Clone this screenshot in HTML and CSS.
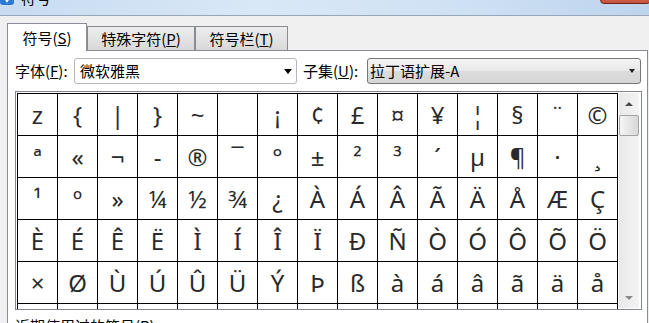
FILE: index.html
```html
<!DOCTYPE html>
<html lang="zh-CN">
<head>
<meta charset="utf-8">
<title>符号</title>
<link rel="stylesheet" href="styles.css">
</head>
<body>
<div class="titlebar">
  <div class="title">
    <svg class="app-icon" viewBox="0 0 14 14" width="14" height="14"><rect x="0" y="0" width="14" height="14" rx="3" fill="#2d7ad6"/><path d="M3 4 L7 10 L11 4" stroke="#fff" stroke-width="2" fill="none"/></svg>
    <span class="title-text">符号</span>
  </div>
  <div class="close-btn"></div>
</div>
<div class="tabs">
  <div class="tab tab-active">符号(<u>S</u>)</div>
  <div class="tab tab-special">特殊字符(<u>P</u>)</div>
  <div class="tab tab-bar">符号栏(<u>T</u>)</div>
</div>
<div class="panel">
  <div class="font-row">
    <span class="lbl lbl-font">字体(<u>F</u>):</span>
    <div class="combo combo-font"><span>微软雅黑</span><i class="arrow"></i></div>
    <span class="lbl lbl-subset">子集(<u>U</u>):</span>
    <div class="combo combo-subset"><span>拉丁语扩展-A</span><i class="arrow arrow-small"></i></div>
  </div>
  <div class="charbox">
    <div class="chargrid">
      <div class="cell">z</div><div class="cell">{</div><div class="cell">|</div><div class="cell">}</div><div class="cell">~</div><div class="cell">&nbsp;</div><div class="cell">¡</div><div class="cell">¢</div><div class="cell">£</div><div class="cell">¤</div><div class="cell">¥</div><div class="cell">¦</div><div class="cell">§</div><div class="cell">¨</div><div class="cell">©</div>
      <div class="cell">ª</div><div class="cell">«</div><div class="cell">¬</div><div class="cell">-</div><div class="cell">®</div><div class="cell">¯</div><div class="cell">°</div><div class="cell">±</div><div class="cell">²</div><div class="cell">³</div><div class="cell">´</div><div class="cell">µ</div><div class="cell">¶</div><div class="cell">·</div><div class="cell">¸</div>
      <div class="cell">¹</div><div class="cell">º</div><div class="cell">»</div><div class="cell">¼</div><div class="cell">½</div><div class="cell">¾</div><div class="cell">¿</div><div class="cell">À</div><div class="cell">Á</div><div class="cell">Â</div><div class="cell">Ã</div><div class="cell">Ä</div><div class="cell">Å</div><div class="cell">Æ</div><div class="cell">Ç</div>
      <div class="cell">È</div><div class="cell">É</div><div class="cell">Ê</div><div class="cell">Ë</div><div class="cell">Ì</div><div class="cell">Í</div><div class="cell">Î</div><div class="cell">Ï</div><div class="cell">Ð</div><div class="cell">Ñ</div><div class="cell">Ò</div><div class="cell">Ó</div><div class="cell">Ô</div><div class="cell">Õ</div><div class="cell">Ö</div>
      <div class="cell">×</div><div class="cell">Ø</div><div class="cell">Ù</div><div class="cell">Ú</div><div class="cell">Û</div><div class="cell">Ü</div><div class="cell">Ý</div><div class="cell">Þ</div><div class="cell">ß</div><div class="cell">à</div><div class="cell">á</div><div class="cell">â</div><div class="cell">ã</div><div class="cell">ä</div><div class="cell">å</div>
      <div class="cell"></div><div class="cell"></div><div class="cell"></div><div class="cell"></div><div class="cell"></div><div class="cell"></div><div class="cell"></div><div class="cell"></div><div class="cell"></div><div class="cell"></div><div class="cell"></div><div class="cell"></div><div class="cell"></div><div class="cell"></div><div class="cell"></div>
    </div>
    <div class="vscroll">
      <div class="sb-btn"><i class="tri-up"></i></div>
      <div class="sb-thumb"></div>
      <div class="sb-track"></div>
      <div class="sb-btn"><i class="tri-down"></i></div>
    </div>
  </div>
  <div class="recent">近期使用过的符号(<u>R</u>):</div>
</div>
</body>
</html>
```
FILE: styles.css
```css
html, body {
  margin: 0;
  padding: 0;
}
body {
  width: 649px;
  height: 323px;
  overflow: hidden;
  background: #f0f0f0;
  font-family: "Noto Sans CJK SC", "Noto Sans", sans-serif;
  font-size: 15px;
  color: #000;
}

.titlebar {
  height: 15px;
  border-bottom: 1px solid #97a7b9;
  background: linear-gradient(90deg, #c7dbf1 0%, #d9e8f7 40%, #cfe1f4 70%, #bdd4ed 100%);
  display: flex;
  justify-content: space-between;
  align-items: flex-start;
}
.title {
  display: flex;
  align-items: center;
  gap: 7px;
  margin-top: -11px;
  line-height: 18px;
}
.app-icon {
  display: block;
}
.close-btn {
  width: 51px;
  height: 20px;
  margin-top: -16px;
  margin-right: -2px;
  box-sizing: border-box;
  border: 1px solid #6e2418;
  border-radius: 0 0 4px 4px;
  background: linear-gradient(#e49a88, #c7503a);
}

.tabs {
  display: flex;
  align-items: flex-end;
  padding-left: 7px;
  margin-top: 7px;
  margin-bottom: -1px;
  position: relative;
}
.tab {
  box-sizing: border-box;
  height: 24px;
  margin-bottom: 1px;
  border: 1px solid #898c95;
  border-bottom: none;
  background: linear-gradient(#ededed, #d9d9d9);
  display: flex;
  align-items: center;
  justify-content: center;
  line-height: 18px;
  white-space: nowrap;
}
.tab-active {
  width: 80px;
  height: 28px;
  margin-bottom: 0;
  background: #fff;
}
.tab-special { width: 108px; }
.tab-bar { width: 93px; }

.panel {
  box-sizing: border-box;
  margin-left: 7px;
  width: 641px;
  height: 290px;
  border: 1px solid #898c95;
  background: #fff;
  padding: 7px 5px 0 7px;
}

.font-row {
  display: flex;
  align-items: center;
  height: 26px;
}
.lbl {
  line-height: 18px;
  white-space: nowrap;
}
.lbl-font { width: 59px; }
.lbl-subset { width: 64px; margin-left: 6px; }
.combo {
  box-sizing: border-box;
  height: 26px;
  display: flex;
  align-items: center;
  justify-content: space-between;
  border-radius: 3px;
  line-height: 18px;
  white-space: nowrap;
}
.combo-font {
  width: 223px;
  border: 1px solid #b5b7bd;
  background: #fff;
  padding: 0 4px 0 5px;
}
.combo-subset {
  width: 274px;
  border: 1px solid #777;
  background: linear-gradient(#f4f4f4, #e8e8e8 50%, #dcdcdc 51%, #d6d6d6);
  padding: 0 5px 0 2px;
}
.arrow {
  width: 0;
  height: 0;
  border-left: 4px solid transparent;
  border-right: 4px solid transparent;
  border-top: 5px solid #000;
}
.arrow-small {
  border-left-width: 3.5px;
  border-right-width: 3.5px;
  border-top-width: 4px;
  border-top-color: #222;
}

.charbox {
  margin-top: 7px;
  box-sizing: border-box;
  height: 219px;
  border: 1px solid #828790;
  padding: 1px;
  display: flex;
  overflow: hidden;
  background: #fff;
}
.chargrid {
  flex: none;
  align-self: flex-start;
  display: grid;
  grid-template-columns: repeat(15, 40px);
  grid-auto-rows: 42px;
  border-left: 1px solid #000;
  border-top: 1px solid #000;
  font-family: "Noto Sans", "DejaVu Sans", sans-serif;
  font-size: 24px;
  color: #2a2a2a;
}
.cell {
  box-sizing: border-box;
  border-right: 1px solid #000;
  border-bottom: 1px solid #000;
  text-align: center;
  line-height: 41px;
  overflow: hidden;
}

.vscroll {
  flex: none;
  width: 20px;
  margin-left: 1px;
  display: flex;
  flex-direction: column;
  background: linear-gradient(90deg, #e9e9e9, #f3f3f3);
}
.sb-btn {
  height: 21px;
  display: flex;
  align-items: center;
  justify-content: center;
}
.tri-up {
  width: 0;
  height: 0;
  border-left: 4px solid transparent;
  border-right: 4px solid transparent;
  border-bottom: 4px solid #4a4a4a;
}
.tri-down {
  width: 0;
  height: 0;
  border-left: 4px solid transparent;
  border-right: 4px solid transparent;
  border-top: 4px solid #8a8a8a;
}
.sb-thumb {
  height: 21px;
  margin-top: 1px;
  box-sizing: border-box;
  border: 1px solid #a3a3a3;
  border-radius: 2px;
  background: linear-gradient(90deg, #f6f6f6, #e6e6e6 50%, #d9d9d9);
}
.sb-track {
  flex: 1;
}

.recent {
  margin-top: 7px;
  line-height: 18px;
}
```
